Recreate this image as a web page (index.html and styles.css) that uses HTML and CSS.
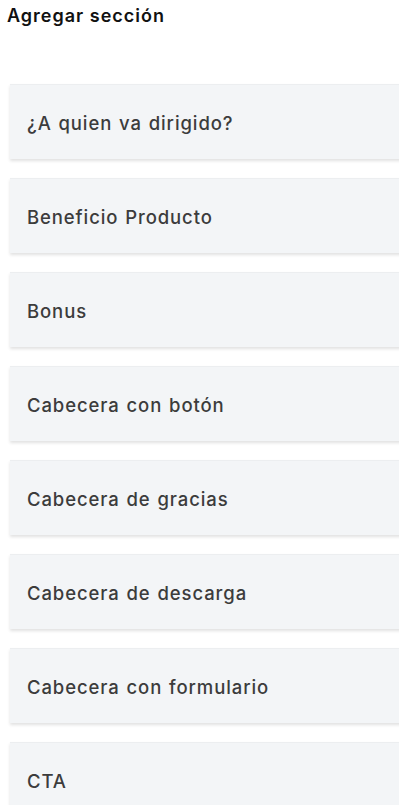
FILE: index.html
```html
<!DOCTYPE html>
<html lang="es">
<head>
    <meta charset="UTF-8">
    <meta name="viewport" content="width=device-width, initial-scale=1.0">
    <title>Agregar sección</title>
    <link rel="stylesheet" href="styles.css">
</head>
<body>
    <div class="panel">
        <h2 class="title">Agregar sección</h2>
        <div class="section-list">
            <div class="section-item">¿A quien va dirigido?</div>
            <div class="section-item">Beneficio Producto</div>
            <div class="section-item">Bonus</div>
            <div class="section-item">Cabecera con botón</div>
            <div class="section-item">Cabecera de gracias</div>
            <div class="section-item">Cabecera de descarga</div>
            <div class="section-item">Cabecera con formulario</div>
            <div class="section-item">CTA</div>
        </div>
    </div>
</body>
</html>
```

FILE: styles.css
```css
body {
    font-family: Inter, "Noto Sans", sans-serif;
    background-color: #fff;
    margin: 0;
    overflow: hidden;
}
.panel {
    padding: 5px 0 0 7px;
}
.title {
    font-size: 18px;
    font-weight: 600;
    letter-spacing: 1px;
    color: #111;
    margin: 0 0 57px 0;
    line-height: 22px;
}
.section-list {
    display: flex;
    flex-direction: column;
    gap: 19px;
    margin-left: 3px;
    margin-right: -20px;
}
.section-item {
    height: 75px;
    display: flex;
    align-items: center;
    padding-left: 17px;
    padding-top: 2px;
    background-color: #f3f5f7;
    border-top: 1px solid #eceef0;
    box-shadow: 0 2px 3px rgba(0,0,0,0.12);
    font-size: 18.5px;
    font-weight: 500;
    letter-spacing: 0.9px;
    word-spacing: 1px;
    color: #3c3c3c;
    box-sizing: border-box;
}
```
